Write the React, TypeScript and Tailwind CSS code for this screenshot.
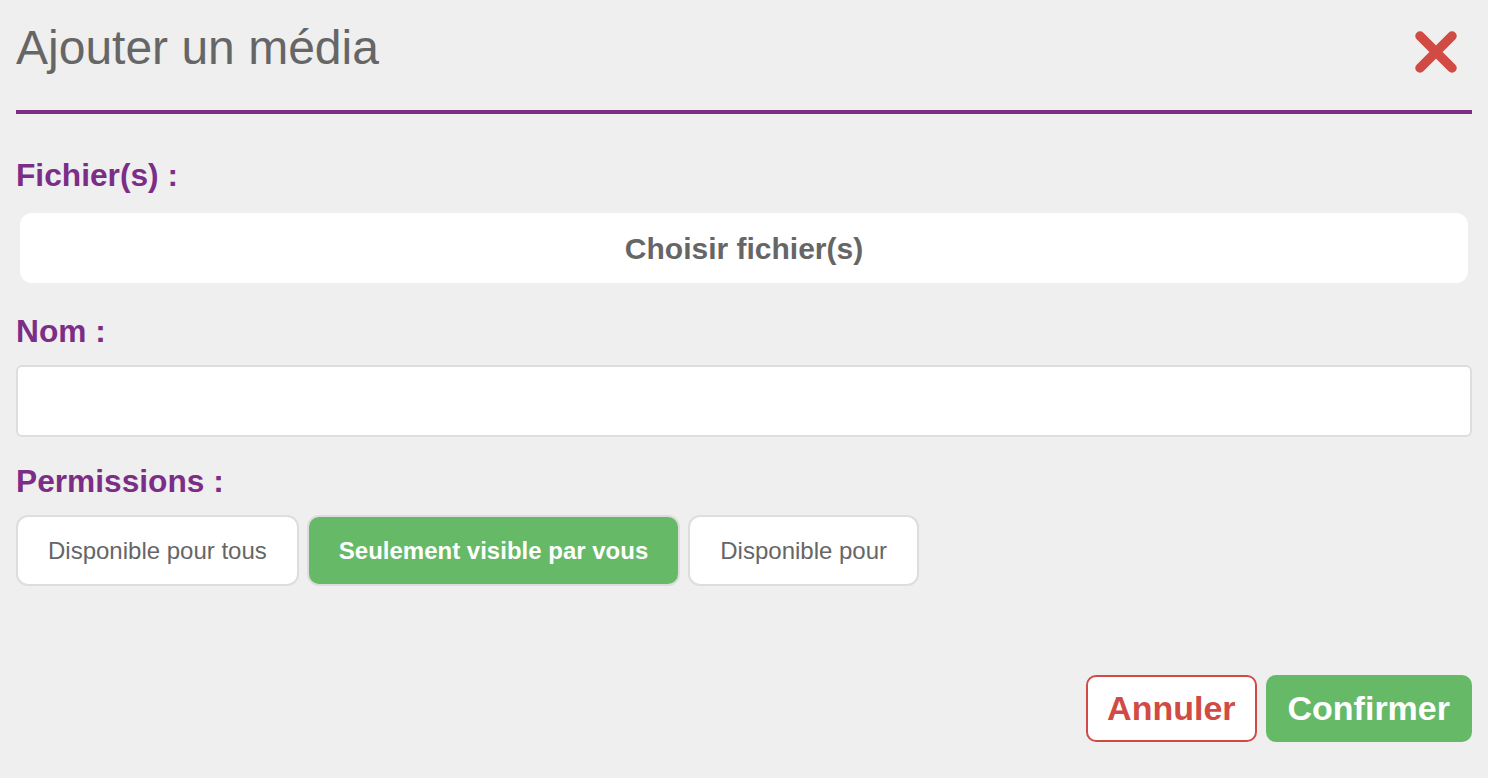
import { useState } from "react";

const PERMISSIONS = [
  { id: "all", label: "Disponible pour tous" },
  { id: "me", label: "Seulement visible par vous" },
  { id: "some", label: "Disponible pour" },
];

const CloseIcon = () => (
  <svg width="42" height="42" viewBox="0 0 42 42" fill="none">
    <path
      d="M5 5 L37 37 M37 5 L5 37"
      stroke="#d14b44"
      strokeWidth="9.5"
      strokeLinecap="round"
    />
  </svg>
);

export default function App() {
  const [permission, setPermission] = useState("me");
  const [name, setName] = useState("");

  return (
    <div
      className="min-h-[778px] bg-[#efefef] px-4"
      style={{ fontFamily: '"Liberation Sans", Arial, sans-serif' }}
    >
      <div className="flex items-start justify-between border-b-4 border-[#7c2e87] pb-[35px] pt-5">
        <h1 className="text-[48px] font-normal leading-[55px] text-[#666666]">
          Ajouter un média
        </h1>
        <button type="button" className="mr-[15px] mt-[11px]">
          <CloseIcon />
        </button>
      </div>

      <div className="mt-[43px]">
        <label className="block text-[31.7px] font-bold leading-[36px] text-[#7c2e87]">
          Fichier(s) :
        </label>
        <div className="mt-4 p-1">
          <button
            type="button"
            className="flex h-[70px] w-full items-center justify-center rounded-xl bg-white text-[30px] font-bold text-[#666666]"
          >
            Choisir fichier(s)
          </button>
        </div>
      </div>

      <div className="mt-[26px]">
        <label className="block text-[31.7px] font-bold leading-[36px] text-[#7c2e87]">
          Nom :
        </label>
        <input
          type="text"
          value={name}
          onChange={(e) => setName(e.target.value)}
          className="mt-4 block h-[72px] w-full rounded-md border-2 border-[#dddddd] bg-white px-4 text-[24px] text-[#555555] outline-none"
        />
      </div>

      <div className="mt-[26px]">
        <label className="block text-[31.7px] font-bold leading-[36px] text-[#7c2e87]">
          Permissions :
        </label>
        <div className="mt-4 flex gap-2">
          {PERMISSIONS.map((p) => (
            <button
              key={p.id}
              type="button"
              onClick={() => setPermission(p.id)}
              className={`h-[71px] rounded-xl border-2 border-[#dddddd] px-[30px] text-[24px] ${
                permission === p.id
                  ? "bg-[#66b966] font-bold text-white"
                  : "bg-white text-[#666666]"
              }`}
            >
              {p.label}
            </button>
          ))}
        </div>
      </div>

      <div className="mt-[89px] flex justify-end gap-[9px]">
        <button
          type="button"
          className="h-[67px] rounded-[10px] border-2 border-[#d14b44] bg-white px-[19px] text-[34px] font-bold text-[#d14b44]"
        >
          Annuler
        </button>
        <button
          type="button"
          className="h-[67px] rounded-[10px] bg-[#66b966] px-[22px] text-[34px] font-bold text-white"
        >
          Confirmer
        </button>
      </div>
    </div>
  );
}
